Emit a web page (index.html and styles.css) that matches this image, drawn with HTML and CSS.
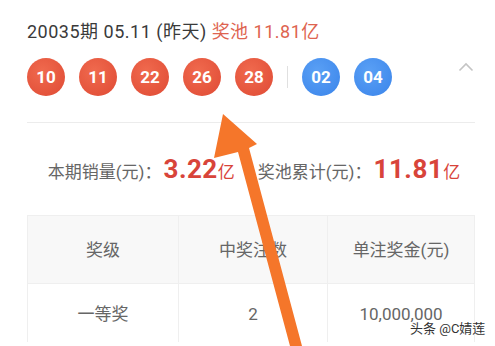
FILE: index.html
```html
<!DOCTYPE html>
<html lang="zh">
<head>
<meta charset="UTF-8">
<meta name="viewport" content="width=device-width, initial-scale=1.0">
<title>开奖详情</title>
<link rel="stylesheet" href="styles.css">
</head>
<body>
<div class="page">
    <div class="draw">
        <div class="title">20035期 05.11 (昨天) <span class="pool">奖池 11.81亿</span></div>
        <div class="balls">
            <span class="ball red">10</span>
            <span class="ball red">11</span>
            <span class="ball red">22</span>
            <span class="ball red">26</span>
            <span class="ball red">28</span>
            <span class="sep"></span>
            <span class="ball blue">02</span>
            <span class="ball blue">04</span>
            <svg class="fold" width="16" height="10" viewBox="0 0 16 10">
                <polyline points="1.5,8.5 8,2 14.5,8.5" fill="none" stroke="#c4c4c4" stroke-width="1.6"/>
            </svg>
        </div>
    </div>

    <div class="stats">
        <div class="stat">本期销量(元)：<b>3.22</b><span class="unit">亿</span></div>
        <span class="stat-sep"></span>
        <div class="stat">奖池累计(元)：<b>11.81</b><span class="unit">亿</span></div>
    </div>

    <table class="prizes">
        <tr class="head">
            <td>奖级</td>
            <td>中奖注数</td>
            <td>单注奖金(元)</td>
        </tr>
        <tr>
            <td>一等奖</td>
            <td>2</td>
            <td>10,000,000</td>
        </tr>
    </table>
</div>

<!-- annotation arrow drawn over the screenshot -->
<svg class="arrow" width="495" height="346" viewBox="0 0 495 346">
    <polygon points="223,114 257,144 249,148 302,346 290,346 238,152 214,158" fill="#f5762a"/>
</svg>

<div class="mark">头条 @C婧莲</div>
</body>
</html>
```

FILE: styles.css
```css
body {
    margin: 0;
    padding: 0;
    background-color: #fff;
    font-family: 'Roboto', 'Noto Sans CJK SC', sans-serif;
    width: 495px;
    height: 346px;
    overflow: hidden;
    position: relative;
}

.page {
    padding: 20px 20px 0 27px;
}

.title {
    font-size: 18px;
    letter-spacing: 0.5px;
    line-height: 24px;
    color: #3a3a3a;
}

.pool {
    color: #de6450;
}

.balls {
    display: flex;
    align-items: center;
    gap: 14px;
    margin-top: 14px;
    padding-bottom: 26px;
    border-bottom: 1px solid #ececec;
}

.ball {
    width: 38px;
    height: 38px;
    border-radius: 50%;
    display: flex;
    align-items: center;
    justify-content: center;
    color: #fff;
    font-weight: bold;
    font-size: 17px;
}

.red {
    background: radial-gradient(circle at 40% 35%, #f06a4e, #df4a34);
}

.blue {
    background: radial-gradient(circle at 40% 35%, #5aa0f5, #3a84ea);
}

.sep {
    width: 1px;
    height: 22px;
    background-color: #e0e0e0;
}

.fold {
    margin-left: auto;
    margin-right: 1px;
    margin-top: -20px;
}

.stats {
    display: flex;
    align-items: center;
    justify-content: center;
    gap: 11px;
    padding: 31px 0 28px 6px;
    font-size: 17px;
    color: #666;
    line-height: 30px;
}

.stat b {
    color: #d8443a;
    font-size: 26px;
    letter-spacing: 0.5px;
    margin-left: 2px;
}

.unit {
    color: #d8443a;
}

.stat-sep {
    width: 1px;
    height: 22px;
    background-color: #e6e6e6;
}

.prizes {
    width: 448px;
    border-collapse: collapse;
    font-size: 17px;
    line-height: 24px;
    color: #666;
}

.prizes td {
    border: 1px solid #efefef;
    text-align: center;
    height: 67px;
    padding: 0;
}

.prizes tr:last-child td {
    height: 40px;
    vertical-align: top;
    padding-top: 18px;
    border-bottom: none;
}

.prizes td:nth-child(1) { width: 150px; }
.prizes td:nth-child(2) { width: 148px; }

.head td {
    background-color: #f8f8f8;
}

.arrow {
    position: absolute;
    left: 0;
    top: 0;
}

.mark {
    position: absolute;
    left: 410px;
    top: 321px;
    font-size: 13px;
    line-height: 16px;
    color: #333;
    text-shadow: 0 0 2px #fff;
}
```
